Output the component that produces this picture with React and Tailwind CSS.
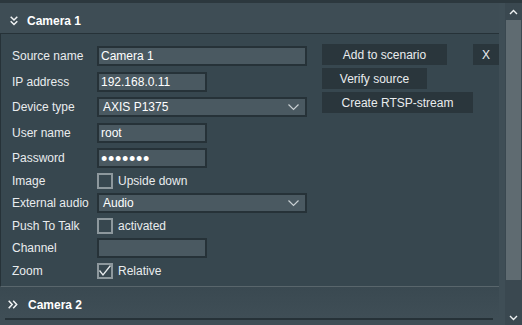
import React from 'react';

const Chevron = ({ dir, className }) => {
  const pts = {
    up: '1,5 4.5,1.5 8,5',
    down: '1,1 4.5,4.5 8,1',
  };
  return (
    <svg className={className} width="9" height="6" viewBox="0 0 9 6" fill="none">
      <polyline points={pts[dir]} stroke="#eef1f2" strokeWidth="1.4" />
    </svg>
  );
};

const Field = ({ wide, children, select }) => (
  <div
    className={`h-[20px] ${wide ? 'w-[210px]' : 'w-[110px]'} border-2 border-[#263238] bg-[#4a5961] flex items-center pl-[2px] pr-[6px] text-white`}
  >
    <span className="flex-1 leading-none">{children}</span>
    {select && (
      <svg width="11" height="7" viewBox="0 0 11 7" fill="none">
        <polyline points="0.5,0.5 5.5,5.5 10.5,0.5" stroke="#c9d0d3" strokeWidth="1.2" />
      </svg>
    )}
  </div>
);

const Check = ({ checked, label }) => (
  <div className="flex items-center h-[15px]">
    <div className="w-[16px] h-[16px] border-2 border-[#8d989d] flex items-center justify-center">
      {checked && (
        <svg width="12" height="12" viewBox="0 0 12 12" fill="none">
          <polyline points="0.5,5.5 4,10 11.5,0.5" stroke="#e6eaec" strokeWidth="1.3" />
        </svg>
      )}
    </div>
    <span className="ml-[5px]">{label}</span>
  </div>
);

const Row = ({ label, mt, h, children }) => (
  <div className={`flex items-center ${mt} ${h}`}>
    <span className="w-[85px]">{label}</span>
    {children}
  </div>
);

const App = () => {
  return (
    <div className="w-[522px] h-[325px] flex flex-col bg-[#3f4e56] font-['Liberation_Sans',Arial,sans-serif] text-[12px] text-[#e9ecee] overflow-hidden">
      {/* top edge */}
      <div className="h-[3px] bg-[#2c383e] shrink-0" />

      <div className="flex flex-1">
        {/* sources list */}
        <div className="w-[505px] flex flex-col">
          {/* Camera 1 header */}
          <div className="w-[499px] h-[30px] flex items-center pt-[5px] pl-[10px] bg-[#3e4d55]">
            <svg width="8" height="10" viewBox="0 0 8 10" fill="none">
              <polyline points="0.7,0.7 4,4 7.3,0.7" stroke="#f2f4f5" strokeWidth="1.5" />
              <polyline points="0.7,5.2 4,8.5 7.3,5.2" stroke="#f2f4f5" strokeWidth="1.5" />
            </svg>
            <span className="ml-[9px] font-bold text-white">Camera 1</span>
          </div>

          {/* Camera 1 panel */}
          <div className="w-[499px] h-[254px] bg-[#37474f] border-t border-l border-[#263238] border-b border-b-[#59666c] flex">
            <div className="pl-[11px] pt-[12px] flex flex-col">
              <Row label="Source name" h="h-[20px]">
                <Field wide>Camera 1</Field>
              </Row>
              <Row label="IP address" mt="mt-[6px]" h="h-[20px]">
                <Field>192.168.0.11</Field>
              </Row>
              <Row label="Device type" mt="mt-[5px]" h="h-[20px]">
                <Field wide select>
                  <span className="pl-[2px]">AXIS P1375</span>
                </Field>
              </Row>
              <Row label="User name" mt="mt-[6px]" h="h-[20px]">
                <Field>root</Field>
              </Row>
              <Row label="Password" mt="mt-[5px]" h="h-[20px]">
                <Field>
                  <span className="text-[18px] tracking-[0.7px] leading-none relative top-[1px]">•••••••</span>
                </Field>
              </Row>
              <Row label="Image" mt="mt-[5px]" h="h-[15px]">
                <Check label="Upside down" />
              </Row>
              <Row label="External audio" mt="mt-[5px]" h="h-[20px]">
                <Field wide select>
                  <span className="pl-[2px]">Audio</span>
                </Field>
              </Row>
              <Row label="Push To Talk" mt="mt-[5px]" h="h-[15px]">
                <Check label="activated" />
              </Row>
              <Row label="Channel" mt="mt-[5px]" h="h-[20px]">
                <Field />
              </Row>
              <Row label="Zoom" mt="mt-[5px]" h="h-[15px]">
                <Check checked label="Relative" />
              </Row>
            </div>

            {/* actions */}
            <div className="ml-[15px] pt-[10px] flex flex-col">
              <div className="flex">
                <button className="w-[125px] h-[21px] bg-[#2a363c] flex items-center justify-center">Add to scenario</button>
                <button className="ml-[26px] w-[26px] h-[21px] bg-[#2a363c] flex items-center justify-center">X</button>
              </div>
              <button className="mt-[3px] w-[105px] h-[21px] bg-[#2a363c] flex items-center justify-center">Verify source</button>
              <button className="mt-[3px] w-[151px] h-[21px] bg-[#2a363c] flex items-center justify-center">Create RTSP-stream</button>
            </div>
          </div>

          {/* Camera 2 header */}
          <div className="w-[499px] h-[31px] flex items-center pt-[4px] pl-[8px] bg-gradient-to-b from-[#3a4951] to-[#3f4e56]">
            <svg width="10" height="9" viewBox="0 0 10 9" fill="none">
              <polyline points="0.7,0.7 4.2,4.5 0.7,8.3" stroke="#f2f4f5" strokeWidth="1.5" />
              <polyline points="5.2,0.7 8.7,4.5 5.2,8.3" stroke="#f2f4f5" strokeWidth="1.5" />
            </svg>
            <span className="ml-[10px] font-bold text-white">Camera 2</span>
          </div>
          <div className="ml-[5px] w-[488px] h-[2px] bg-[#263238]" />
        </div>

        {/* scrollbar */}
        <div className="w-[17px] flex flex-col bg-[#3a4850]">
          <div className="h-[17px] flex items-center justify-center">
            <Chevron dir="up" />
          </div>
          <div className="ml-px w-[15px] h-[260px] bg-[#5f6b71]" />
          <div className="flex-1 flex items-end justify-center pb-[4px]">
            <Chevron dir="down" />
          </div>
        </div>
      </div>
    </div>
  );
};

export default App;
